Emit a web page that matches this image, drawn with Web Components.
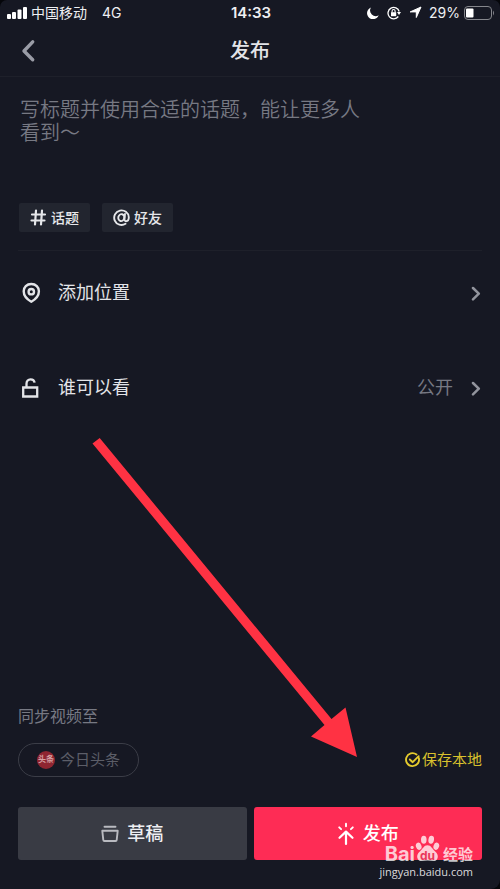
<!DOCTYPE html>
<html lang="zh-CN">
<head>
<meta charset="utf-8">
<meta name="viewport" content="width=device-width, initial-scale=1">
<title>发布</title>
<style>
html{background:#05060a}
body{margin:0;font-family:"Liberation Sans","Noto Sans CJK SC",sans-serif;color:#e3e4e8}
</style>
</head>
<body>
<publish-screen></publish-screen>
<script>
const reset = `*{box-sizing:border-box}svg{display:block;flex:none}
button{font:inherit;color:inherit;background:none;border:0;margin:0;padding:0;cursor:pointer}`;

function define(name, css, html) {
  customElements.define(name, class extends HTMLElement {
    constructor() {
      super();
      this.attachShadow({mode: 'open'}).innerHTML = `<style>${reset}${css}</style>${html}`;
    }
  });
}

define('status-bar', `
:host{display:grid;grid-template-columns:1fr auto 1fr;align-items:center;height:25px;padding:0 5px 0 7px;font-family:Inter,"Noto Sans CJK SC",sans-serif;font-size:14px;line-height:20px;color:#eeeff2}
.side{display:flex;align-items:center}
.net{margin-left:15px}
.carrier{margin-left:4px}
.end{justify-content:flex-end}
b{font-weight:600;font-size:15px}
.end svg+svg{margin-left:8px}
.pct{margin:0 4px 0 7px}`, `
<div class="side">
<svg width="20" height="12" viewBox="0 0 20 12" fill="#fff"><rect y="7" width="4" height="5" rx="1"/><rect x="5" y="5" width="4" height="7" rx="1"/><rect x="10.500" y="2.500" width="4" height="9.500" rx="1"/><rect x="16" width="4" height="12" rx="1"/></svg>
<span class="carrier">中国移动</span><span class="net">4G</span></div>
<b>14:33</b>
<div class="side end">
<svg width="12" height="12" viewBox="0 0 12 12" fill="#fff"><path d="M4 .5A6 6 0 1 0 11.700 8.200 5.600 5.600 0 0 1 4 .5Z"/></svg>
<svg width="14" height="14" viewBox="0 0 14 14" fill="none" stroke="#fff" stroke-width="1.300"><path d="M11.300 10.500A5.700 5.700 0 1 1 12.200 5.500"/><path d="M10 6h4l-2 3z" fill="#fff" stroke="none"/><rect x="4" y="6.200" width="5.200" height="4" fill="#fff" stroke="none"/><path d="M5.100 6.500V5a1.500 1.500 0 0 1 3 0v1.500" stroke-width="1.100"/></svg>
<svg width="13" height="13" viewBox="0 0 13 13" fill="#fff" stroke="#fff" stroke-linejoin="round"><path d="M12 1 7.300 11.500V5.900H1.200Z"/></svg>
<span class="pct">29%</span>
<svg width="31" height="14" viewBox="0 0 31 14"><rect x=".5" y=".5" width="27" height="13" rx="3.500" fill="none" stroke="#85868c"/><rect x="2" y="2.500" width="7.500" height="9" rx="1" fill="#fff"/><path d="M29 4.500q2 2.500 0 5z" fill="#85868c"/></svg>
</div>`);

define('nav-bar', `
:host{display:grid;grid-template-columns:1fr auto 1fr;align-items:center;height:52px;padding:0 20px;border-bottom:1px solid #1e202a}
h1{margin:0;font-size:20px;line-height:28px;font-weight:500}
button{justify-self:start}`, `
<button aria-label="返回"><svg width="18" height="24" viewBox="0 0 18 24" fill="none" stroke="#9a9ca6" stroke-width="3.400" stroke-linecap="round" stroke-linejoin="round"><path d="M12.700 2.800 4 12l8.700 8.800"/></svg></button>
<h1><slot></slot></h1>`);

define('caption-field', `
:host{display:block}
textarea{display:block;width:100%;height:92px;resize:none;border:0;outline:0;padding:0;background:none;color:#e3e4e8;font-family:"Noto Sans CJK SC",sans-serif;font-size:20px;line-height:23px;font-weight:350;overflow:hidden;padding-right:120px}
textarea::placeholder{color:#777983;opacity:1}`, `
<textarea aria-label="标题" placeholder="写标题并使用合适的话题，能让更多人看到～"></textarea>`);

define('tag-chip', `
:host{display:block}
button{display:flex;align-items:center;gap:4px;height:29px;padding:0 11px;border-radius:2px;background:#22252f;font-size:14px;line-height:20px;font-weight:500;color:#e6e7ea}`, `
<button><slot name="icon"></slot><slot></slot></button>`);

define('setting-row', `
:host{display:block}
button{display:flex;align-items:center;width:100%;height:84px;font-size:18px;line-height:26px;text-align:left}
.icon{width:40px}
.label{flex:1}
.value{color:#777983;margin-right:18px}`, `
<button><span class="icon"><slot name="icon"></slot></span><span class="label"><slot></slot></span><span class="value"><slot name="value"></slot></span>
<svg width="10" height="16" viewBox="0 0 10 16" fill="none" stroke="#92949d" stroke-width="2.500" stroke-linecap="round" stroke-linejoin="round"><path d="m2 3 5.800 5.700L2 14.300"/></svg></button>`);

define('sync-pill', `
:host{display:block}
button{display:flex;align-items:center;gap:5px;height:34px;padding:0 18px;border:1px solid #3b3d47;border-radius:17px;font-size:15px;line-height:22px;color:#5c5e68}
.logo{display:grid;place-items:center;width:18px;height:18px;border-radius:50%;background:#8f2531;color:#d5a0a4;font-size:8px;line-height:12px;font-weight:700;white-space:nowrap}`, `
<button aria-pressed="false"><span class="logo">头条</span><slot></slot></button>`);

define('save-option', `
:host{display:block}
label{display:flex;align-items:center;gap:1px;font-size:15px;line-height:22px;color:#d9c02d;cursor:pointer}
.box{display:grid}
.box>*{grid-area:1/1}
input{appearance:none;width:16px;height:16px;margin:0}
svg{pointer-events:none}
input:not(:checked)+svg .tick{display:none}`, `
<label><span class="box"><input type="checkbox" checked><svg width="16" height="16" viewBox="0 0 16 16" fill="none" stroke="#e5cb2e" stroke-width="1.900" stroke-linecap="round" stroke-linejoin="round"><path d="M13.800 5.900A6.500 6.500 0 1 1 11.500 2.500"/><path class="tick" d="m4.800 7.500 2.900 2.700 6-6"/></svg></span><slot></slot></label>`);

define('action-button', `
:host{display:block;flex:1}
button{display:flex;align-items:center;justify-content:center;gap:8px;width:100%;height:53px;border-radius:3px;background:#393b44;font-size:18px;line-height:26px;font-weight:500;color:#eeeff2}
:host([primary]) button{background:#fe2c55;color:#fff}`, `
<button><slot name="icon"></slot><slot></slot></button>`);

define('pointer-arrow', `
:host{position:absolute;left:90px;top:434px;pointer-events:none}`, `
<svg width="270" height="326" viewBox="90 434 270 326" fill="#ff3243"><path d="M92.500 443.500 99.700 438 331.500 719 345.500 707.500 357 757 311 736.500 324.500 725Z"/></svg>`);

define('site-mark', `
:host{position:absolute;right:27px;bottom:9px;color:rgba(255,255,255,.76);pointer-events:none;font-family:"Open Sans","Noto Sans CJK SC",sans-serif}
.name{display:flex;align-items:flex-end;justify-content:flex-end;line-height:20px}
.latin{font-family:Inter,sans-serif;font-size:20px;font-weight:700}
.paw{display:grid;justify-items:center;align-items:end;margin-right:3px}
.paw>*{grid-area:1/1}
.du{font-family:Inter,sans-serif;font-size:12px;line-height:15px;font-weight:700;color:#e9365a;padding-bottom:1px}
.cn{font-size:15px;font-weight:700}
.url{font-size:11px;line-height:16px;text-align:right;color:rgba(255,255,255,.85)}`, `
<div class="name"><span class="latin">Bai</span><span class="paw"><svg width="25" height="29" viewBox="0 0 27 31" fill="currentColor"><ellipse cx="4" cy="12" rx="3" ry="4" transform="rotate(-18 4 12)"/><ellipse cx="9.500" cy="5" rx="3" ry="4.300"/><ellipse cx="17.500" cy="5" rx="3" ry="4.300" transform="rotate(10 17.500 5)"/><ellipse cx="23" cy="12" rx="3" ry="4" transform="rotate(18 23 12)"/><path d="M13.500 11C9.500 11 8.500 15 5.500 17.500 2.500 20 1.500 23 3 25.800c2 3.600 6.300 1.700 10.500 1.700s8.500 1.900 10.500-1.700c1.500-2.800.5-5.800-2.500-8.300C18.500 15 17.500 11 13.500 11Z"/></svg><span class="du">du</span></span><span class="cn">经验</span></div>
<div class="url">jingyan.baidu.com</div>`);

define('publish-screen', `
:host{display:flex;flex-direction:column;position:relative;min-height:100vh;background:#161823;border-radius:7px 7px 9px 0;overflow:hidden}
main{flex:1;display:flex;flex-direction:column;padding:20px 18px 29px}
caption-field{padding-left:2px}
.chips{display:flex;gap:12px;padding:14px 1px 18px;border-bottom:1px solid #1e202a}
.rows{display:flex;flex-direction:column;gap:11px;padding-right:1px}
footer{margin-top:auto}
p{margin:0 0 14px;font-size:16px;line-height:24px;color:#777983}
.sync{display:flex;justify-content:space-between;align-items:center;margin-bottom:30px}
.actions{display:flex;gap:7px}
`, `
<status-bar></status-bar>
<nav-bar>发布</nav-bar>
<main>
<caption-field></caption-field>
<div class="chips">
<tag-chip><svg slot="icon" width="17" height="17" viewBox="0 0 17 17" fill="none" stroke="#e6e7ea" stroke-width="2.200" stroke-linecap="round"><path d="M2 5.500h13M1.500 11.500h13M6 1.500 5 15.500M12 1.500 11 15.500"/></svg>话题</tag-chip>
<tag-chip><svg slot="icon" width="17" height="17" viewBox="0 0 17 17" fill="none" stroke="#e6e7ea" stroke-width="1.900" stroke-linecap="round"><path d="M12.500 14.800A7.300 7.300 0 1 1 15.800 8.300c0 2.700-1.300 3.900-2.700 3.900-1.500 0-1.800-1.200-1.600-2.600L12 5"/><ellipse cx="8.300" cy="8.600" rx="3" ry="3.500" transform="rotate(15 8.300 8.600)"/></svg>好友</tag-chip>
</div>
<div class="rows">
<setting-row><svg slot="icon" width="26" height="22" viewBox="0 0 26 22" fill="none" stroke="#e3e4e8" stroke-width="2.400"><path d="M13.300 2C8.700 2 5.700 5.300 5.700 9.200c0 4.600 3.600 8.200 7.600 10.500 4-2.300 7.600-5.900 7.600-10.500C20.900 5.300 17.900 2 13.300 2Z"/><circle cx="13.300" cy="9.700" r="2.700"/></svg>添加位置</setting-row>
<setting-row><svg slot="icon" width="26" height="22" viewBox="0 0 26 22" fill="none" stroke="#e3e4e8" stroke-width="2.300"><path d="M5.200 10.500h14v9h-14zM8.500 10.500V6.700C8.500 4 10.200 2.300 12.500 2.300c2.200 0 3.800 1.300 4.100 3.300"/></svg>谁可以看<span slot="value">公开</span></setting-row>
</div>
<footer>
<p>同步视频至</p>
<div class="sync"><sync-pill>今日头条</sync-pill><save-option>保存本地</save-option></div>
<div class="actions">
<action-button><svg slot="icon" width="18" height="18" viewBox="0 0 18 18" fill="none" stroke="#b9bac0" stroke-width="1.900" stroke-linecap="round" stroke-linejoin="round"><path d="M3.500 1.700h11M1.300 5.800h15.400l-1 9.200q-.1 1-1.100 1H3.400q-1 0-1.100-1Z"/></svg>草稿</action-button>
<action-button primary><svg slot="icon" width="18" height="24" viewBox="0 0 18 24" fill="none" stroke="#fff" stroke-width="2.200" stroke-linecap="round" stroke-linejoin="round"><path d="M9 22V10M2.500 15.800 9 9.600l6.500 6.200"/><path stroke-width="1.900" d="M9 1.800v2.400M2.200 5.300l1.900 1.900M15.800 5.300l-1.900 1.900"/></svg>发布</action-button>
</div>
</footer>
</main>
<pointer-arrow></pointer-arrow>
<site-mark></site-mark>`);
</script>
</body>
</html>
